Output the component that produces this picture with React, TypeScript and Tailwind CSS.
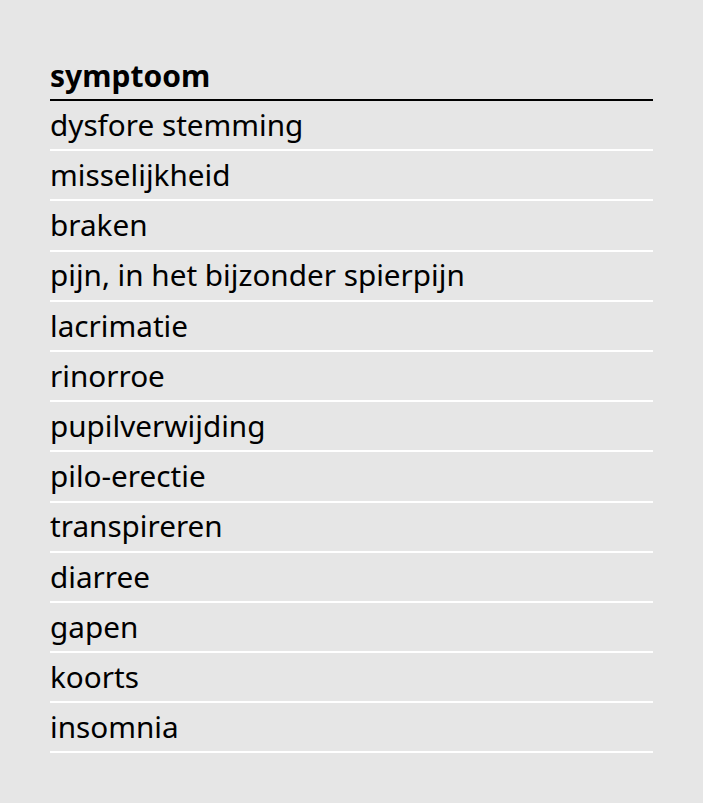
import React from "react";

const symptoms = [
  "dysfore stemming",
  "misselijkheid",
  "braken",
  "pijn, in het bijzonder spierpijn",
  "lacrimatie",
  "rinorroe",
  "pupilverwijding",
  "pilo-erectie",
  "transpireren",
  "diarree",
  "gapen",
  "koorts",
  "insomnia",
];

export default function App() {
  return (
    <div
      className="min-h-[803px] w-full bg-[#e6e6e6] px-[50px] pt-[51px]"
      style={{ fontFamily: '"Noto Sans", "Open Sans", sans-serif' }}
    >
      <div className="w-[603px]">
        <div className="flex h-[50px] items-center border-b-2 border-black text-[30px] font-bold text-black">
          symptoom
        </div>
        {symptoms.map((s) => (
          <div
            key={s}
            className="flex h-[50.2px] items-center border-b-2 border-white text-[29.7px] text-black"
          >
            {s}
          </div>
        ))}
      </div>
    </div>
  );
}
